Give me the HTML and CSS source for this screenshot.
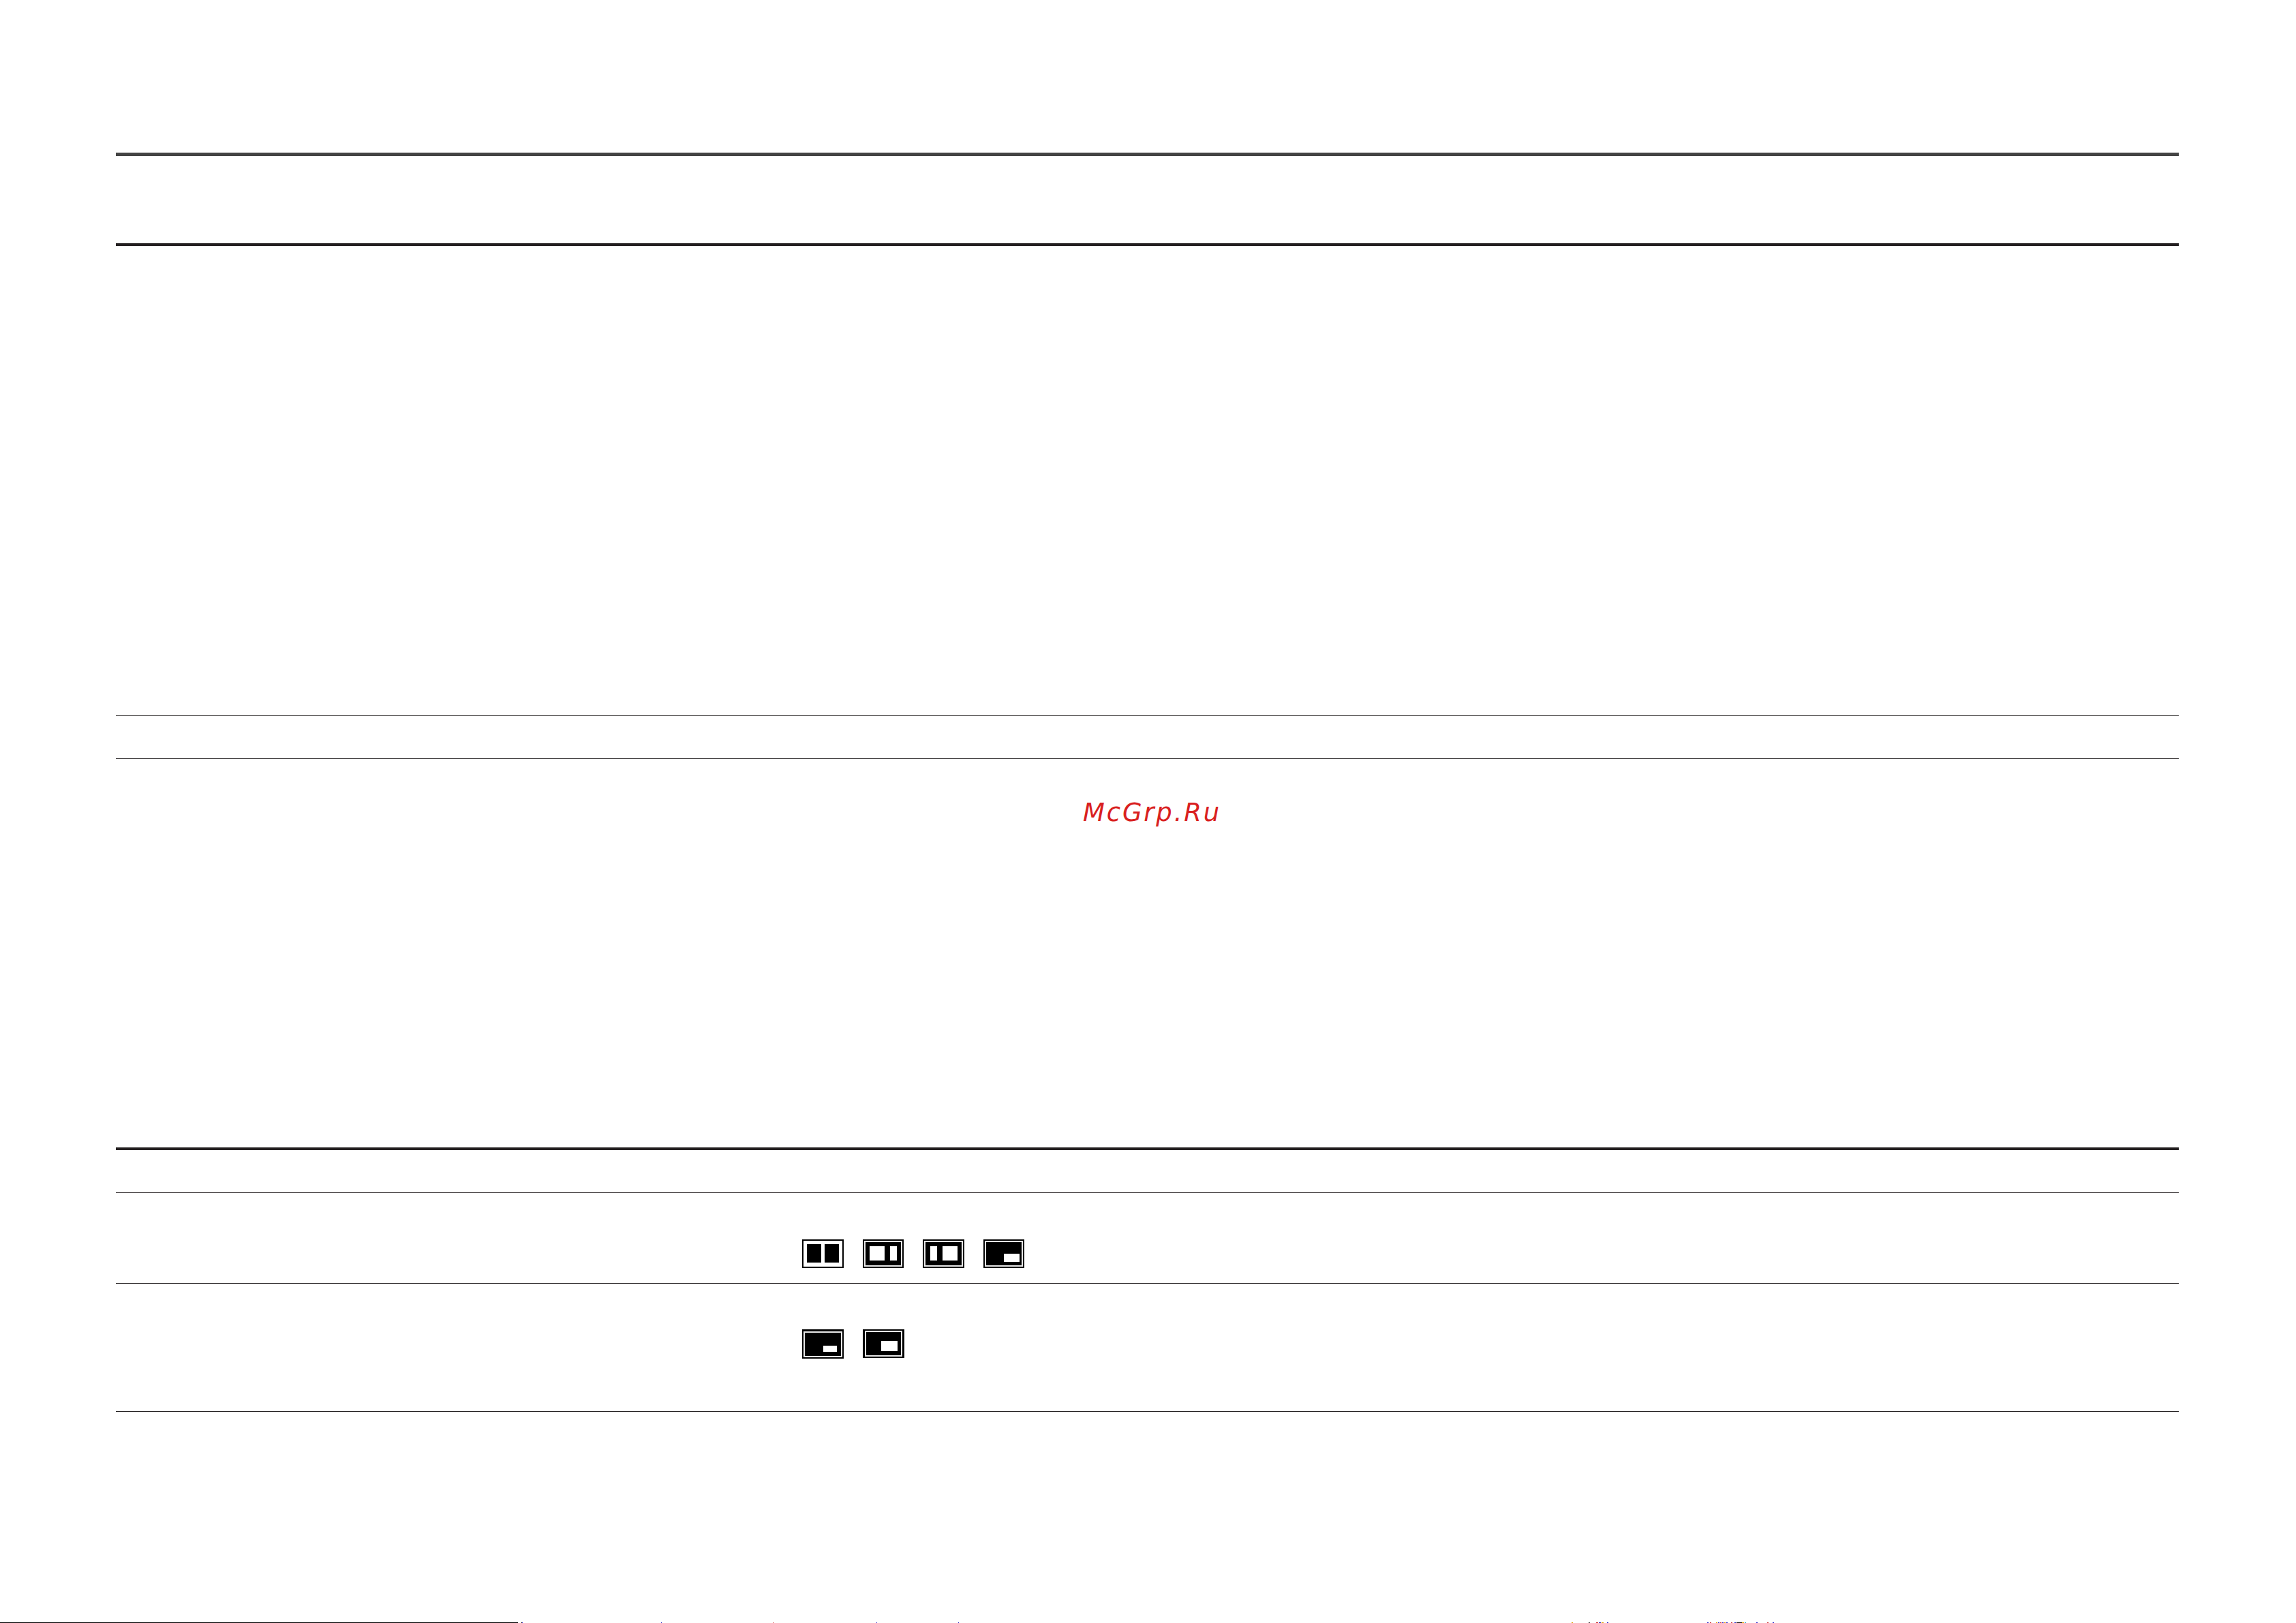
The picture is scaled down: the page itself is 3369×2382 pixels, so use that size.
FILE: index.html
```html
<!DOCTYPE html>
<html lang="en">
<head>
<meta charset="utf-8">
<title>McGrp.Ru</title>
<link rel="stylesheet" href="styles.css">
</head>
<body>
<main class="page">
  <div class="rule heavy-grey first"></div>
  <div class="rule heavy head-end"></div>
  <div class="rule thin row-a"></div>
  <div class="rule thin row-b"></div>
  <p class="watermark">McGrp.Ru</p>
  <div class="rule heavy second"></div>
  <div class="rule thin row-c"></div>
  <section class="icon-row row-d">
    <div class="icons">
      <svg class="ic" width="61" height="42" viewBox="0 0 61 42"><rect width="61" height="42"/><rect x="2" y="2" width="57" height="38" fill="#fff"/><rect x="7" y="7" width="21" height="27"/><rect x="33" y="7" width="21" height="27"/></svg>
      <svg class="ic" width="60" height="42" viewBox="0 0 60 42"><rect width="60" height="42"/><rect x="2" y="2" width="56" height="38" fill="#e8e8e8"/><rect x="4" y="4" width="52" height="34"/><rect x="10" y="10" width="22" height="21" fill="#fff"/><rect x="40" y="10" width="10" height="21" fill="#fff"/></svg>
      <svg class="ic" width="61" height="42" viewBox="0 0 61 42"><rect width="61" height="42"/><rect x="2" y="2" width="57" height="38" fill="#e8e8e8"/><rect x="4" y="4" width="53" height="34"/><rect x="11" y="10" width="10" height="21" fill="#fff"/><rect x="29" y="10" width="22" height="21" fill="#fff"/></svg>
      <svg class="ic" width="60" height="42" viewBox="0 0 60 42"><rect width="60" height="42"/><rect x="2" y="2" width="56" height="38" fill="#e8e8e8"/><rect x="4" y="4" width="52" height="34"/><rect x="30" y="21" width="23" height="12" fill="#fff"/></svg>
    </div>
  </section>
  <div class="rule thin row-e"></div>
  <section class="icon-row row-f">
    <div class="icons">
      <svg class="ic" width="61" height="43" viewBox="0 0 61 43"><rect width="61" height="43"/><rect x="2" y="3" width="57" height="38" fill="#e8e8e8"/><rect x="4" y="5" width="53" height="34"/><rect x="31" y="24" width="20" height="9" fill="#fff"/></svg>
      <svg class="ic" width="61" height="42" viewBox="0 0 61 42"><rect width="61" height="42"/><rect x="3" y="2" width="55" height="38" fill="#e8e8e8"/><rect x="5" y="4" width="51" height="34"/><rect x="27" y="17" width="24" height="15" fill="#fff"/></svg>
    </div>
  </section>
  <div class="rule thin row-g"></div>
</main>
<svg class="cut-strip" width="3369" height="1" viewBox="0 0 3369 1">
  <rect x="0" width="760" height="1" fill="#000"/>
  <rect x="765" width="1" height="1" fill="#000"/>
  <rect x="766" width="1" height="1" fill="#22c"/>
  <rect x="970" width="1" height="1" fill="#22c"/>
  <rect x="1134" width="1" height="1" fill="#c33"/>
  <rect x="1286" width="1" height="1" fill="#22c"/>
  <rect x="1406" width="1" height="1" fill="#22c"/>
  <rect x="2306" width="2" height="1" fill="#e0a000"/>
  <rect x="2331" width="2" height="1" fill="#444"/>
  <rect x="2342" width="3" height="1" fill="#c33"/>
  <rect x="2346" width="3" height="1" fill="#22c"/>
  <rect x="2350" width="3" height="1" fill="#e0a000"/>
  <rect x="2358" width="2" height="1" fill="#22c"/>
  <rect x="2505" width="2" height="1" fill="#22c"/>
  <rect x="2509" width="2" height="1" fill="#c33"/>
  <rect x="2518" width="2" height="1" fill="#e0a000"/>
  <rect x="2521" width="2" height="1" fill="#22c"/>
  <rect x="2524" width="2" height="1" fill="#c33"/>
  <rect x="2527" width="2" height="1" fill="#22c"/>
  <rect x="2530" width="2" height="1" fill="#e0a000"/>
  <rect x="2533" width="2" height="1" fill="#22c"/>
  <rect x="2540" width="2" height="1" fill="#c33"/>
  <rect x="2545" width="2" height="1" fill="#22c"/>
  <rect x="2548" width="8" height="1" fill="#111"/>
  <rect x="2556" width="3" height="1" fill="#e0a000"/>
  <rect x="2560" width="2" height="1" fill="#3ac"/>
  <rect x="2577" width="2" height="1" fill="#22c"/>
  <rect x="2593" width="2" height="1" fill="#c33"/>
  <rect x="2601" width="2" height="1" fill="#22c"/>
</svg>
</body>
</html>
```
FILE: styles.css
```css
html, body {
  margin: 0;
  padding: 0;
  background: #fff;
}
body {
  position: relative;
  height: 2382px;
  overflow: hidden;
}
.page {
  margin: 0 172px 0 170px;
  padding-top: 224px;
  display: flex;
  flex-direction: column;
}
.rule {
  background: #231f20;
}
.heavy-grey {
  height: 5px;
  background: #444;
}
.heavy {
  height: 4px;
}
.thin {
  height: 1px;
}
.head-end {
  margin-top: 128px;
}
.row-a {
  margin-top: 689px;
}
.row-b {
  margin-top: 62px;
}
.watermark {
  margin: 59px 0 0;
  height: 40px;
  line-height: 40px;
  text-align: center;
  padding-left: 14px;
  font-family: "DejaVu Sans", sans-serif;
  font-style: italic;
  font-size: 37px;
  letter-spacing: 2.8px;
  color: #d92020;
}
.second {
  margin-top: 471px;
}
.row-c {
  margin-top: 62px;
}
.icon-row {
  display: flex;
  padding-left: 1007px;
}
.row-d {
  height: 132px;
}
.row-f {
  height: 187px;
}
.row-d .icons {
  margin-top: 68px;
}
.row-f .icons {
  margin-top: 67px;
}
.icons {
  display: flex;
  gap: 28px;
  align-items: flex-start;
  height: 43px;
}
.ic {
  display: block;
  flex: none;
}
.cut-strip {
  position: absolute;
  left: 0;
  bottom: 0;
  display: block;
}
```
